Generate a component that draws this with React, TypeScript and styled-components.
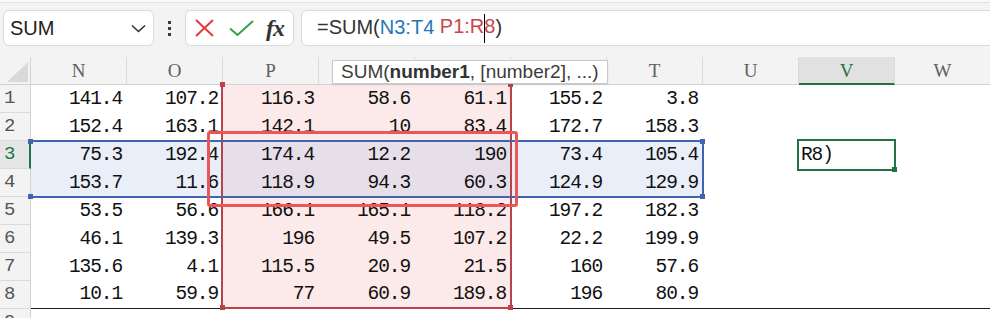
import * as React from 'react';
import styled, { createGlobalStyle, css } from 'styled-components';

// ______________________________________________________
//
// @ Data

type Fill = 'none' | 'blue' | 'red' | 'both';

const COLUMNS = ['N', 'O', 'P', 'Q', 'R', 'S', 'T', 'U', 'V', 'W'];

const ROWS: string[][] = [
  ['141.4', '107.2', '116.3', '58.6', '61.1', '155.2', '3.8'],
  ['152.4', '163.1', '142.1', '10', '83.4', '172.7', '158.3'],
  ['75.3', '192.4', '174.4', '12.2', '190', '73.4', '105.4'],
  ['153.7', '11.6', '118.9', '94.3', '60.3', '124.9', '129.9'],
  ['53.5', '56.6', '166.1', '165.1', '118.2', '197.2', '182.3'],
  ['46.1', '139.3', '196', '49.5', '107.2', '22.2', '199.9'],
  ['135.6', '4.1', '115.5', '20.9', '21.5', '160', '57.6'],
  ['10.1', '59.9', '77', '60.9', '189.8', '196', '80.9'],
  [],
];

const ACTIVE_ROW = 3;
const ACTIVE_COL = 8; // V

const fillFor = (row: number, col: number): Fill => {
  const blue = row >= 3 && row <= 4 && col <= 6;
  const red = row >= 1 && row <= 8 && col >= 2 && col <= 4;
  if (blue && red) return 'both';
  if (blue) return 'blue';
  if (red) return 'red';
  return 'none';
};

const FILLS: Record<Fill, string> = {
  none: '#ffffff',
  blue: '#e9eef8',
  red: '#fce9e9',
  both: '#e6dfea',
};

// ______________________________________________________
//
// @ Styles

const GlobalStyle = createGlobalStyle`
  html, body {
    margin: 0;
    padding: 0;
    background: #f3f3f3;
    overflow: hidden;
  }
  * { box-sizing: border-box; }
`;

const Page = styled.div`
  width: 990px;
  height: 318px;
  overflow: hidden;
  background: #f3f3f3;
  display: flex;
  flex-direction: column;
`;

const TopStrip = styled.div`
  height: 3px;
  background: #fafafa;
  border-bottom: 1px solid #e2e2e2;
`;

const Toolbar = styled.div`
  display: flex;
  align-items: center;
  height: 54px;
  padding: 0 0 4px 3px;
  font-family: 'Liberation Sans', Arial, sans-serif;
`;

const Box = styled.div`
  height: 36px;
  background: #fff;
  border: 1px solid #dadada;
  border-radius: 6px;
  display: flex;
  align-items: center;
`;

const NameBox = styled(Box)`
  width: 151px;
  justify-content: space-between;
  padding: 0 7px 0 6px;
  font-size: 20px;
  color: #222;
`;

const Grip = styled.div`
  width: 31px;
  display: flex;
  flex-direction: column;
  align-items: center;
  gap: 3px;
  > span {
    width: 3px;
    height: 3px;
    background: #3a3a3a;
  }
`;

const ActionBox = styled(Box)`
  width: 109px;
  padding-left: 9px;
  > svg { flex: none; }
`;

const Fx = styled.span`
  margin-left: 12px;
  font-family: 'Liberation Serif', serif;
  font-style: italic;
  font-weight: bold;
  font-size: 24px;
  color: #333;
  letter-spacing: -1px;
`;

const FormulaBox = styled(Box)`
  flex: 1;
  margin: 0 -20px 0 7px;
  padding-left: 15px;
  font-size: 20px;
  color: #333;
`;

const FormulaText = styled.span`
  white-space: pre;
`;

const Ref = styled.span<{ $tone: 'blue' | 'red' }>`
  color: ${(p) => (p.$tone === 'blue' ? '#2376b7' : '#c9454a')};
`;

const Caret = styled.span`
  display: inline-block;
  width: 1px;
  height: 29px;
  margin: 0 -1px 0 0;
  background: #000;
  vertical-align: middle;
`;

const Sheet = styled.div`
  position: relative;
  display: grid;
  grid-template-columns: 31px repeat(10, 96px);
  grid-auto-rows: 28px;
  height: 261px;
  overflow: hidden;
  background: #fff;
`;

const Corner = styled.div`
  background: #f3f3f3;
  border-right: 1px solid #d2d2d2;
  border-bottom: 1px solid #d2d2d2;
  display: flex;
  align-items: flex-end;
  justify-content: flex-end;
  padding: 0 2px 2px 0;
`;

const ColHeader = styled.div<{ $active?: boolean }>`
  background: ${(p) => (p.$active ? '#e1e1e1' : '#f3f3f3')};
  color: ${(p) => (p.$active ? '#217346' : '#606060')};
  border-right: 1px solid #dadada;
  border-bottom: ${(p) => (p.$active ? '2px solid #217346' : '1px solid #d2d2d2')};
  font-family: 'Liberation Serif', serif;
  font-size: 19px;
  display: flex;
  align-items: center;
  justify-content: center;
  padding-top: 1px;
`;

const RowHeader = styled.div<{ $active?: boolean }>`
  background: ${(p) => (p.$active ? '#e6e6e6' : '#f3f3f3')};
  color: ${(p) => (p.$active ? '#217346' : '#555')};
  border-bottom: 1px solid #dadada;
  border-right: ${(p) => (p.$active ? '2px solid #217346' : '1px solid #d2d2d2')};
  font-family: 'Liberation Mono', monospace;
  font-size: 19px;
  line-height: 27px;
  padding-left: 4px;
`;

const Cell = styled.div<{ $fill: Fill; $bottom?: boolean; $left?: boolean }>`
  background: ${(p) => FILLS[p.$fill]};
  font-family: 'Liberation Mono', monospace;
  font-size: 19.5px;
  letter-spacing: -1.1px;
  color: #111;
  line-height: 28px;
  white-space: nowrap;
  text-align: ${(p) => (p.$left ? 'left' : 'right')};
  padding: ${(p) => (p.$left ? '0 0 0 2px' : '0 5px 0 0')};
  ${(p) =>
    p.$bottom &&
    css`
      border-bottom: 1px solid #1a1a1a;
      line-height: 27px;
    `}
`;

type Frame = { $x: number; $y: number; $w: number; $h: number };

const Overlay = styled.div<Frame>`
  position: absolute;
  left: ${(p) => p.$x}px;
  top: ${(p) => p.$y}px;
  width: ${(p) => p.$w}px;
  height: ${(p) => p.$h}px;
  pointer-events: none;
`;

const BlueRange = styled(Overlay)`
  border-top: 2px solid #3e66b0;
  border-bottom: 2px solid #3e66b0;
  border-right: 2px solid #3e66b0;
`;

const RedRange = styled(Overlay)`
  border-left: 2px solid #b8434a;
  border-right: 2px solid #b8434a;
  border-bottom: 2px solid #b8434a;
`;

const ActiveCell = styled(Overlay)`
  border: 2px solid #217346;
`;

const Mark = styled(Overlay)`
  border: 3px solid #eb5757;
  border-radius: 3px;
`;

const Handle = styled.span<{ $color: string; $v: 'top' | 'bottom'; $h: 'left' | 'right' }>`
  position: absolute;
  width: 5px;
  height: 5px;
  background: ${(p) => p.$color};
  ${(p) => p.$v}: -3px;
  ${(p) => p.$h}: -3px;
`;

const Tip = styled(Overlay)`
  background: #fff;
  border: 1px solid #c9c9c9;
  box-shadow: 0 1px 2px rgba(0, 0, 0, 0.08);
  font-family: 'Liberation Sans', Arial, sans-serif;
  font-size: 19px;
  line-height: 22px;
  color: #3c3c3c;
  padding-left: 8px;
  white-space: nowrap;
  > b { color: #333; }
`;

// ______________________________________________________
//
// @ Icons

const Chevron = () => (
  <svg width="15" height="9" viewBox="0 0 15 9">
    <polyline points="1,1.5 7.5,7.5 14,1.5" fill="none" stroke="#333" strokeWidth="1.6" />
  </svg>
);

const Cross = () => (
  <svg width="19" height="18" viewBox="0 0 19 18">
    <path d="M1 1 L18 17 M18 1 L1 17" stroke="#e2383e" strokeWidth="2" fill="none" />
  </svg>
);

const Tick = () => (
  <svg width="25" height="16" viewBox="0 0 25 16" style={{ marginLeft: 15 }}>
    <polyline points="1,8.5 8.5,15 24,1" fill="none" stroke="#38a04b" strokeWidth="2" />
  </svg>
);

const CornerMark = () => (
  <svg width="21" height="20" viewBox="0 0 21 20">
    <polygon points="21,0 21,20 0,20" fill="#d9d9d9" />
  </svg>
);

// ______________________________________________________
//
// @ View

const handles = (color: string) =>
  (['top', 'bottom'] as const).flatMap((v) =>
    (['left', 'right'] as const).map((h) => <Handle key={v + h} $color={color} $v={v} $h={h} />)
  );

export default function App() {
  return (
    <Page>
      <GlobalStyle />
      <TopStrip />
      <Toolbar>
        <NameBox>
          <span>SUM</span>
          <Chevron />
        </NameBox>
        <Grip>
          <span />
          <span />
          <span />
        </Grip>
        <ActionBox>
          <Cross />
          <Tick />
          <Fx>fx</Fx>
        </ActionBox>
        <FormulaBox>
          <FormulaText>
            {'=SUM('}
            <Ref $tone="blue">N3:T4</Ref>
            {' '}
            <Ref $tone="red">
              P1:R<Caret />8
            </Ref>
            {')'}
          </FormulaText>
        </FormulaBox>
      </Toolbar>

      <Sheet>
        <Corner>
          <CornerMark />
        </Corner>
        {COLUMNS.map((c, i) => (
          <ColHeader key={c} $active={i === ACTIVE_COL}>
            {c}
          </ColHeader>
        ))}
        {ROWS.map((values, r) => {
          const row = r + 1;
          return (
            <React.Fragment key={row}>
              <RowHeader $active={row === ACTIVE_ROW}>{row}</RowHeader>
              {COLUMNS.map((c, col) => {
                const isActive = row === ACTIVE_ROW && col === ACTIVE_COL;
                return (
                  <Cell key={c} $fill={fillFor(row, col)} $bottom={row === 8} $left={isActive}>
                    {isActive ? 'R8)' : values[col] ?? ''}
                  </Cell>
                );
              })}
            </React.Fragment>
          );
        })}

        <RedRange $x={221} $y={28} $w={291} $h={224}>
          {handles('#b8434a')}
        </RedRange>
        <BlueRange $x={31} $y={83} $w={673} $h={58}>
          {handles('#3e66b0')}
        </BlueRange>
        <ActiveCell $x={797} $y={82} $w={99} $h={32}>
          <Handle $color="#217346" $v="bottom" $h="right" />
        </ActiveCell>
        <Mark $x={207} $y={74} $w={311} $h={76} />
        <Tip $x={332} $y={3} $w={276} $h={24}>
          SUM(<b>number1</b>, [number2], ...)
        </Tip>
      </Sheet>
    </Page>
  );
}
